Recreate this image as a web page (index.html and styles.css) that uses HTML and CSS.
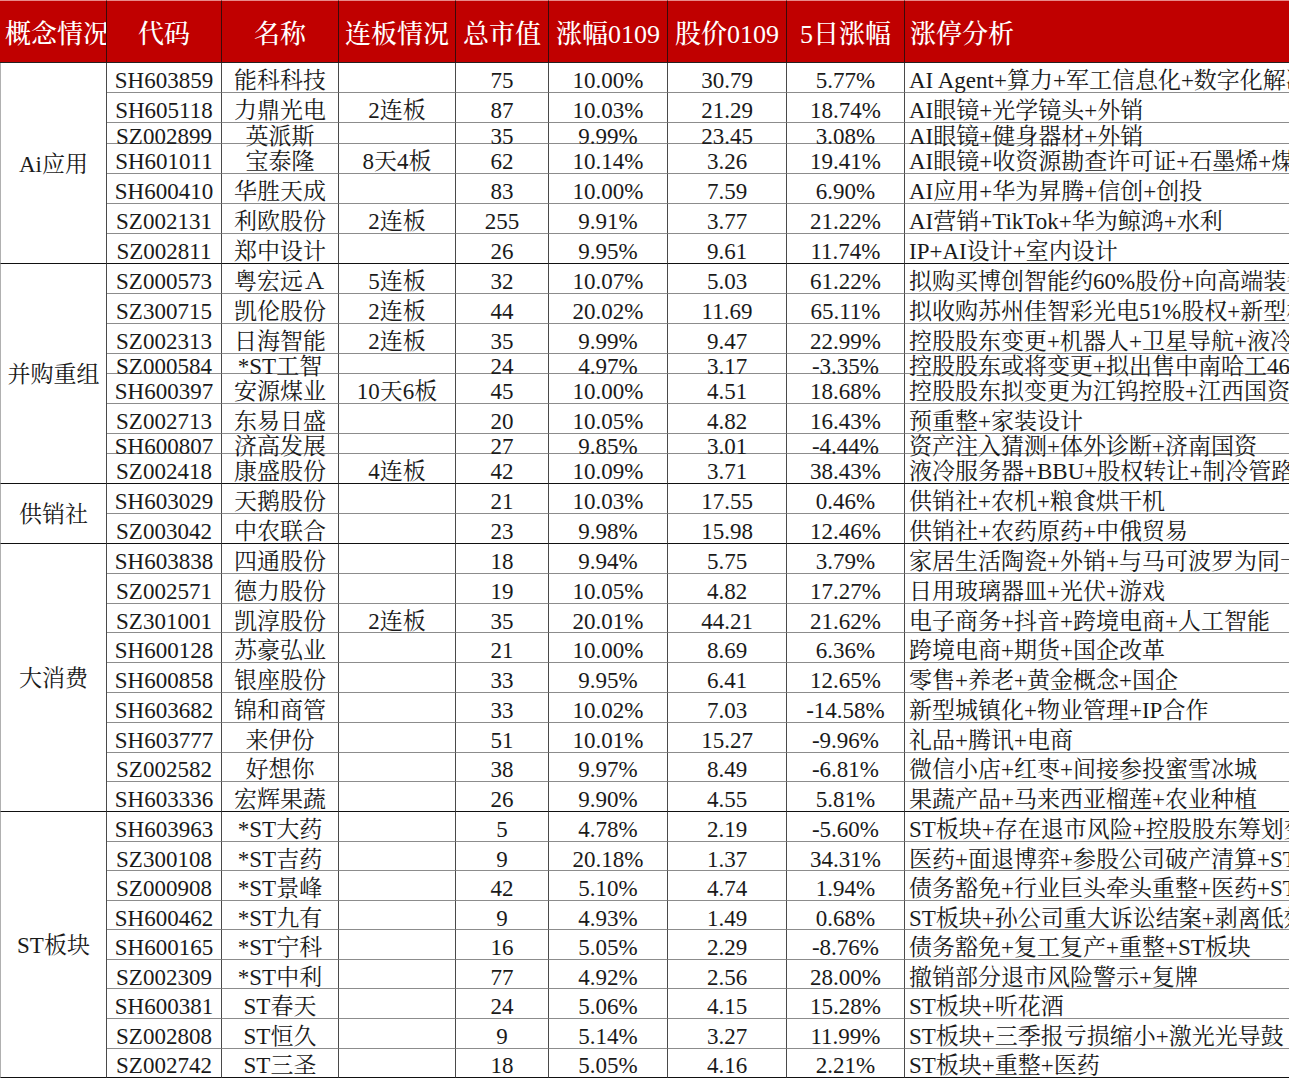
FILE: index.html
```html
<!DOCTYPE html>
<html lang="zh">
<head>
<meta charset="utf-8">
<title>涨停分析</title>
<link rel="stylesheet" href="styles.css">
</head>
<body>
<div class="tbl">
  <div class="hd hd-first">概念情况</div>
  <div class="hd">代码</div>
  <div class="hd">名称</div>
  <div class="hd">连板情况</div>
  <div class="hd">总市值</div>
  <div class="hd">涨幅0109</div>
  <div class="hd">股价0109</div>
  <div class="hd">5日涨幅</div>
  <div class="hd hd-note">涨停分析</div>

  <div class="grp span7">Ai应用</div>
  <div class="row"><div class="c">SH603859</div><div class="c">能科科技</div><div class="c"></div><div class="c">75</div><div class="c">10.00%</div><div class="c">30.79</div><div class="c">5.77%</div><div class="c note">AI Agent+算力+军工信息化+数字化解决方案</div></div>
  <div class="row"><div class="c">SH605118</div><div class="c">力鼎光电</div><div class="c">2连板</div><div class="c">87</div><div class="c">10.03%</div><div class="c">21.29</div><div class="c">18.74%</div><div class="c note">AI眼镜+光学镜头+外销</div></div>
  <div class="row"><div class="c">SZ002899</div><div class="c">英派斯</div><div class="c"></div><div class="c">35</div><div class="c">9.99%</div><div class="c">23.45</div><div class="c">3.08%</div><div class="c note">AI眼镜+健身器材+外销</div></div>
  <div class="row"><div class="c">SH601011</div><div class="c">宝泰隆</div><div class="c">8天4板</div><div class="c">62</div><div class="c">10.14%</div><div class="c">3.26</div><div class="c">19.41%</div><div class="c note">AI眼镜+收资源勘查许可证+石墨烯+煤化工</div></div>
  <div class="row"><div class="c">SH600410</div><div class="c">华胜天成</div><div class="c"></div><div class="c">83</div><div class="c">10.00%</div><div class="c">7.59</div><div class="c">6.90%</div><div class="c note">AI应用+华为昇腾+信创+创投</div></div>
  <div class="row"><div class="c">SZ002131</div><div class="c">利欧股份</div><div class="c">2连板</div><div class="c">255</div><div class="c">9.91%</div><div class="c">3.77</div><div class="c">21.22%</div><div class="c note">AI营销+TikTok+华为鲸鸿+水利</div></div>
  <div class="row end"><div class="c">SZ002811</div><div class="c">郑中设计</div><div class="c"></div><div class="c">26</div><div class="c">9.95%</div><div class="c">9.61</div><div class="c">11.74%</div><div class="c note">IP+AI设计+室内设计</div></div>

  <div class="grp span8">并购重组</div>
  <div class="row"><div class="c">SZ000573</div><div class="c">粤宏远Ａ</div><div class="c">5连板</div><div class="c">32</div><div class="c">10.07%</div><div class="c">5.03</div><div class="c">61.22%</div><div class="c note">拟购买博创智能约60%股份+向高端装备转型</div></div>
  <div class="row"><div class="c">SZ300715</div><div class="c">凯伦股份</div><div class="c">2连板</div><div class="c">44</div><div class="c">20.02%</div><div class="c">11.69</div><div class="c">65.11%</div><div class="c note">拟收购苏州佳智彩光电51%股权+新型材料</div></div>
  <div class="row"><div class="c">SZ002313</div><div class="c">日海智能</div><div class="c">2连板</div><div class="c">35</div><div class="c">9.99%</div><div class="c">9.47</div><div class="c">22.99%</div><div class="c note">控股股东变更+机器人+卫星导航+液冷</div></div>
  <div class="row"><div class="c">SZ000584</div><div class="c">*ST工智</div><div class="c"></div><div class="c">24</div><div class="c">4.97%</div><div class="c">3.17</div><div class="c">-3.35%</div><div class="c note">控股股东或将变更+拟出售中南哈工46%股权</div></div>
  <div class="row"><div class="c">SH600397</div><div class="c">安源煤业</div><div class="c">10天6板</div><div class="c">45</div><div class="c">10.00%</div><div class="c">4.51</div><div class="c">18.68%</div><div class="c note">控股股东拟变更为江钨控股+江西国资</div></div>
  <div class="row"><div class="c">SZ002713</div><div class="c">东易日盛</div><div class="c"></div><div class="c">20</div><div class="c">10.05%</div><div class="c">4.82</div><div class="c">16.43%</div><div class="c note">预重整+家装设计</div></div>
  <div class="row"><div class="c">SH600807</div><div class="c">济高发展</div><div class="c"></div><div class="c">27</div><div class="c">9.85%</div><div class="c">3.01</div><div class="c">-4.44%</div><div class="c note">资产注入猜测+体外诊断+济南国资</div></div>
  <div class="row end"><div class="c">SZ002418</div><div class="c">康盛股份</div><div class="c">4连板</div><div class="c">42</div><div class="c">10.09%</div><div class="c">3.71</div><div class="c">38.43%</div><div class="c note">液冷服务器+BBU+股权转让+制冷管路</div></div>

  <div class="grp span2">供销社</div>
  <div class="row"><div class="c">SH603029</div><div class="c">天鹅股份</div><div class="c"></div><div class="c">21</div><div class="c">10.03%</div><div class="c">17.55</div><div class="c">0.46%</div><div class="c note">供销社+农机+粮食烘干机</div></div>
  <div class="row end"><div class="c">SZ003042</div><div class="c">中农联合</div><div class="c"></div><div class="c">23</div><div class="c">9.98%</div><div class="c">15.98</div><div class="c">12.46%</div><div class="c note">供销社+农药原药+中俄贸易</div></div>

  <div class="grp span9">大消费</div>
  <div class="row"><div class="c">SH603838</div><div class="c">四通股份</div><div class="c"></div><div class="c">18</div><div class="c">9.94%</div><div class="c">5.75</div><div class="c">3.79%</div><div class="c note">家居生活陶瓷+外销+与马可波罗为同一实控人</div></div>
  <div class="row"><div class="c">SZ002571</div><div class="c">德力股份</div><div class="c"></div><div class="c">19</div><div class="c">10.05%</div><div class="c">4.82</div><div class="c">17.27%</div><div class="c note">日用玻璃器皿+光伏+游戏</div></div>
  <div class="row"><div class="c">SZ301001</div><div class="c">凯淳股份</div><div class="c">2连板</div><div class="c">35</div><div class="c">20.01%</div><div class="c">44.21</div><div class="c">21.62%</div><div class="c note">电子商务+抖音+跨境电商+人工智能</div></div>
  <div class="row"><div class="c">SH600128</div><div class="c">苏豪弘业</div><div class="c"></div><div class="c">21</div><div class="c">10.00%</div><div class="c">8.69</div><div class="c">6.36%</div><div class="c note">跨境电商+期货+国企改革</div></div>
  <div class="row"><div class="c">SH600858</div><div class="c">银座股份</div><div class="c"></div><div class="c">33</div><div class="c">9.95%</div><div class="c">6.41</div><div class="c">12.65%</div><div class="c note">零售+养老+黄金概念+国企</div></div>
  <div class="row"><div class="c">SH603682</div><div class="c">锦和商管</div><div class="c"></div><div class="c">33</div><div class="c">10.02%</div><div class="c">7.03</div><div class="c">-14.58%</div><div class="c note">新型城镇化+物业管理+IP合作</div></div>
  <div class="row"><div class="c">SH603777</div><div class="c">来伊份</div><div class="c"></div><div class="c">51</div><div class="c">10.01%</div><div class="c">15.27</div><div class="c">-9.96%</div><div class="c note">礼品+腾讯+电商</div></div>
  <div class="row"><div class="c">SZ002582</div><div class="c">好想你</div><div class="c"></div><div class="c">38</div><div class="c">9.97%</div><div class="c">8.49</div><div class="c">-6.81%</div><div class="c note">微信小店+红枣+间接参投蜜雪冰城</div></div>
  <div class="row end"><div class="c">SH603336</div><div class="c">宏辉果蔬</div><div class="c"></div><div class="c">26</div><div class="c">9.90%</div><div class="c">4.55</div><div class="c">5.81%</div><div class="c note">果蔬产品+马来西亚榴莲+农业种植</div></div>

  <div class="grp span9">ST板块</div>
  <div class="row"><div class="c">SH603963</div><div class="c">*ST大药</div><div class="c"></div><div class="c">5</div><div class="c">4.78%</div><div class="c">2.19</div><div class="c">-5.60%</div><div class="c note">ST板块+存在退市风险+控股股东筹划变更</div></div>
  <div class="row"><div class="c">SZ300108</div><div class="c">*ST吉药</div><div class="c"></div><div class="c">9</div><div class="c">20.18%</div><div class="c">1.37</div><div class="c">34.31%</div><div class="c note">医药+面退博弈+参股公司破产清算+ST板块</div></div>
  <div class="row"><div class="c">SZ000908</div><div class="c">*ST景峰</div><div class="c"></div><div class="c">42</div><div class="c">5.10%</div><div class="c">4.74</div><div class="c">1.94%</div><div class="c note">债务豁免+行业巨头牵头重整+医药+ST板块</div></div>
  <div class="row"><div class="c">SH600462</div><div class="c">*ST九有</div><div class="c"></div><div class="c">9</div><div class="c">4.93%</div><div class="c">1.49</div><div class="c">0.68%</div><div class="c note">ST板块+孙公司重大诉讼结案+剥离低效资产</div></div>
  <div class="row"><div class="c">SH600165</div><div class="c">*ST宁科</div><div class="c"></div><div class="c">16</div><div class="c">5.05%</div><div class="c">2.29</div><div class="c">-8.76%</div><div class="c note">债务豁免+复工复产+重整+ST板块</div></div>
  <div class="row"><div class="c">SZ002309</div><div class="c">*ST中利</div><div class="c"></div><div class="c">77</div><div class="c">4.92%</div><div class="c">2.56</div><div class="c">28.00%</div><div class="c note">撤销部分退市风险警示+复牌</div></div>
  <div class="row"><div class="c">SH600381</div><div class="c">ST春天</div><div class="c"></div><div class="c">24</div><div class="c">5.06%</div><div class="c">4.15</div><div class="c">15.28%</div><div class="c note">ST板块+听花酒</div></div>
  <div class="row"><div class="c">SZ002808</div><div class="c">ST恒久</div><div class="c"></div><div class="c">9</div><div class="c">5.14%</div><div class="c">3.27</div><div class="c">11.99%</div><div class="c note">ST板块+三季报亏损缩小+激光光导鼓</div></div>
  <div class="row end"><div class="c">SZ002742</div><div class="c">ST三圣</div><div class="c"></div><div class="c">18</div><div class="c">5.05%</div><div class="c">4.16</div><div class="c">2.21%</div><div class="c note">ST板块+重整+医药</div></div>
</div>
</body>
</html>
```

FILE: styles.css
```css
html, body {
  margin: 0;
  padding: 0;
  background: #ffffff;
}

body {
  width: 1289px;
  height: 1080px;
  overflow: hidden;
  font-family: "Liberation Serif", "Noto Serif CJK SC", "Noto Sans CJK SC", serif;
  color: #1a1a1a;
}

.tbl {
  display: grid;
  grid-template-columns: 107px 115px 117px 117px 93px 119px 119px 118px 384px;
  grid-template-rows:
    63px
    repeat(2, 30px) 21px repeat(4, 30px)
    repeat(3, 30px) 20px repeat(2, 30px) 20px 30px
    repeat(2, 30px)
    repeat(9, 29.8px)
    repeat(9, 29.55px);
  width: 1289px;
}

.row {
  display: contents;
}

.hd {
  box-sizing: border-box;
  background: #c00000;
  color: #ffffff;
  font-size: 26px;
  font-weight: 500;
  line-height: 30px;
  display: flex;
  align-items: center;
  justify-content: center;
  padding-top: 7px;
  white-space: nowrap;
  overflow: hidden;
  border-right: 1px solid #3a0a0a;
  border-bottom: 1px solid #222222;
  border-top: 1px solid #e88a8a;
}

.hd-first {
  justify-content: flex-start;
  padding-left: 5px;
}

.hd-note {
  justify-content: flex-start;
  padding-left: 5px;
  border-right: none;
}

.c {
  box-sizing: border-box;
  font-size: 23px;
  line-height: 24px;
  display: flex;
  align-items: center;
  justify-content: center;
  padding-top: 7px;
  white-space: nowrap;
  border-right: 1px solid #4a4a4a;
  border-bottom: 1px solid #8c8c8c;
}

.note {
  justify-content: flex-start;
  padding-left: 4px;
  overflow-x: clip;
  overflow-y: visible;
  border-right: none;
}

.end .c {
  border-bottom-color: #111111;
}

.grp {
  box-sizing: border-box;
  grid-column: 1;
  font-size: 23px;
  line-height: 24px;
  display: flex;
  align-items: center;
  justify-content: center;
  padding-top: 3px;
  white-space: nowrap;
  border-left: 1px solid #b0b0b0;
  border-right: 1px solid #4a4a4a;
  border-bottom: 1px solid #111111;
}

.span7 { grid-row: span 7; }
.span8 { grid-row: span 8; }
.span2 { grid-row: span 2; }
.span9 { grid-row: span 9; }
```
